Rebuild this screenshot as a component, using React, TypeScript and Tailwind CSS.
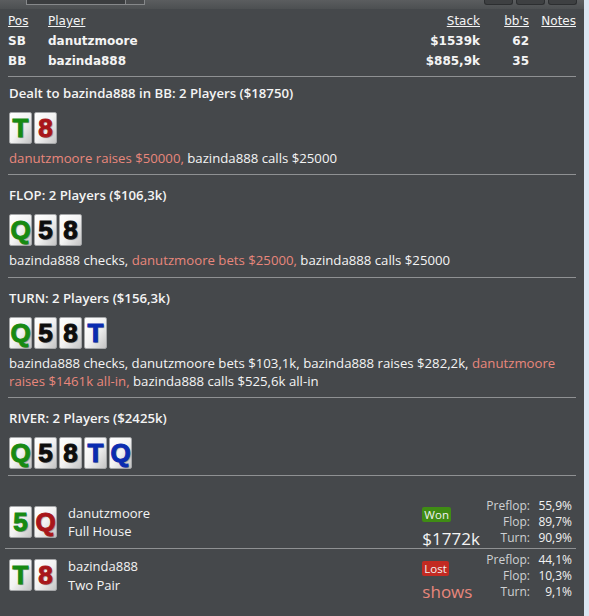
import React from "react";

type Suit = "g" | "r" | "k" | "b";

const suitColor: Record<Suit, string> = {
  g: "text-[#178a12]",
  r: "text-[#a8161a]",
  k: "text-[#0d0d0d]",
  b: "text-[#0a2cb0]",
};

function Card({ rank, suit }: { rank: string; suit: Suit }) {
  return (
    <div className="flex h-[32px] w-[23px] items-center justify-center overflow-hidden rounded-[2px] border border-[#a4a6a8] bg-gradient-to-br from-white via-[#f3f3f3] to-[#c4c4c4]">
      <span
        className={`font-['Liberation_Sans',sans-serif] text-[26px] font-bold leading-none [-webkit-text-stroke:1px_currentColor] [text-shadow:1px_1px_1px_rgba(0,0,0,0.35)] ${suitColor[suit]}`}
      >
        {rank}
      </span>
    </div>
  );
}

function Cards({ cards }: { cards: [string, Suit][] }) {
  return (
    <div className="flex gap-[2px]">
      {cards.map(([r, s], i) => (
        <Card key={i} rank={r} suit={s} />
      ))}
    </div>
  );
}

const Sep = () => <div className="ml-[8px] mr-[8px] h-px bg-[#8f9193]" />;

const Hot = ({ children }: { children: React.ReactNode }) => (
  <span className="text-[#e8877c]">{children}</span>
);

function Street({
  title,
  cards,
  top = "pt-[11px]",
  bottom = "pb-[8px]",
  children,
}: {
  title: string;
  cards: [string, Suit][];
  top?: string;
  bottom?: string;
  children?: React.ReactNode;
}) {
  return (
    <div className={`pl-[9px] pr-[8px] ${top} ${bottom}`}>
      <div className="text-[13.2px] font-semibold leading-[18px] text-[#f4f4f4]">{title}</div>
      <div className="mt-[10px]">
        <Cards cards={cards} />
      </div>
      {children && <div className="mt-[5px] text-[13.2px] leading-[18px] text-[#f4f4f4]">{children}</div>}
    </div>
  );
}

function Stats({ rows }: { rows: [string, string][] }) {
  return (
    <div className="grid grid-cols-[auto_42px] text-[12px] leading-[16px]">
      {rows.map(([k, v]) => (
        <React.Fragment key={k}>
          <span className="text-right text-[#cfd1d3]">{k}</span>
          <span className="text-right text-[#f2f2f2]">{v}</span>
        </React.Fragment>
      ))}
    </div>
  );
}

export default function App() {
  return (
    <div className="flex h-[616px] w-[589px] overflow-hidden bg-[#dbe6f2] font-['Open_Sans',sans-serif]">
      <div className="w-[584px] bg-[#45484b]">
        {/* toolbar, cut off at the top */}
        <div className="flex h-[9px] items-start bg-gradient-to-b from-[#5b5d5f] to-[#4d5052] pl-[26px] pr-[7px]">
          <div className="h-[5px] w-[100px] border-b border-l border-r border-[#86888a] bg-[#3b3d3f]" />
          <div className="h-[5px] w-[19px] border-b border-r border-[#86888a] bg-[#4a4c4e]" />
          <div className="ml-auto flex gap-[3px]">
            {[0, 1, 2].map((i) => (
              <div
                key={i}
                className="h-[5px] w-[29px] rounded-b-[3px] border-b border-l border-r border-[#2c2e30] bg-[#3e4042]"
              />
            ))}
          </div>
        </div>

        {/* players table */}
        <div className="pb-[5px] pl-[8px] pr-[8px] pt-[2px] font-['DejaVu_Sans',sans-serif] text-[12px] leading-[20px] text-[#f4f4f4]">
          <div className="grid grid-cols-[40px_1fr_80px_49px_47px]">
            <span className="underline">Pos</span>
            <span className="underline">Player</span>
            <span className="text-right underline">Stack</span>
            <span className="text-right underline">bb's</span>
            <span className="text-right underline">Notes</span>
            <span className="font-bold">SB</span>
            <span className="font-bold">danutzmoore</span>
            <span className="text-right font-bold">$1539k</span>
            <span className="text-right font-bold">62</span>
            <span />
            <span className="font-bold">BB</span>
            <span className="font-bold">bazinda888</span>
            <span className="text-right font-bold">$885,9k</span>
            <span className="text-right font-bold">35</span>
            <span />
          </div>
        </div>
        <Sep />

        <Street
          title="Dealt to bazinda888 in BB: 2 Players ($18750)"
          cards={[["T", "g"], ["8", "r"]]}
          top="pt-[7px]"
          bottom="pb-[7px]"
        >
          <Hot>danutzmoore raises $50000,</Hot> bazinda888 calls $25000
        </Street>
        <Sep />

        <Street title="FLOP: 2 Players ($106,3k)" cards={[["Q", "g"], ["5", "k"], ["8", "k"]]}>
          bazinda888 checks, <Hot>danutzmoore bets $25000,</Hot> bazinda888 calls $25000
        </Street>
        <Sep />

        <Street
          title="TURN: 2 Players ($156,3k)"
          cards={[["Q", "g"], ["5", "k"], ["8", "k"], ["T", "b"]]}
          bottom="pb-[7px]"
        >
          bazinda888 checks, danutzmoore bets $103,1k, bazinda888 raises $282,2k,{" "}
          <Hot>danutzmoore raises $1461k all-in,</Hot> bazinda888 calls $525,6k all-in
        </Street>
        <Sep />

        <Street
          title="RIVER: 2 Players ($2425k)"
          cards={[["Q", "g"], ["5", "k"], ["8", "k"], ["T", "b"], ["Q", "b"]]}
          bottom="pb-[6px]"
        />
        <Sep />

        {/* showdown */}
        <div className="flex h-[72px] items-start pl-[9px] pr-[12px] pt-[22px]">
          <div className="mt-[8px]">
            <Cards cards={[["5", "g"], ["Q", "r"]]} />
          </div>
          <div className="ml-[11px] mt-[6px] text-[13px] leading-[18px] text-[#f4f4f4]">
            <div>danutzmoore</div>
            <div>Full House</div>
          </div>
          <div className="ml-auto mr-[10px] mt-[3px] w-[54px]">
            <span className="inline-block rounded-[2px] bg-[#3f8c14] px-[2px] text-[11.5px] leading-[15px] text-[#f2f2f2]">
              Won
            </span>
            <div className="mt-[3px] text-[17px] leading-[22px] text-[#f4f4f4]">$1772k</div>
          </div>
          <Stats rows={[["Preflop:", "55,9%"], ["Flop:", "89,7%"], ["Turn:", "90,9%"]]} />
        </div>
        <div className="ml-[5px] mr-[8px] h-px bg-[#8f9193]" />
        <div className="flex items-start pl-[9px] pr-[12px] pt-[3px]">
          <div className="mt-[7px]">
            <Cards cards={[["T", "g"], ["8", "r"]]} />
          </div>
          <div className="ml-[11px] mt-[5px] text-[13px] leading-[18px] text-[#f4f4f4]">
            <div>bazinda888</div>
            <div className="mt-px">Two Pair</div>
          </div>
          <div className="ml-auto mr-[10px] mt-[3px] w-[54px]">
            <span className="inline-block rounded-[2px] bg-[#c22a22] px-[2px] text-[11.5px] leading-[15px] text-[#f2f2f2]">
              Lost
            </span>
            <div className="mt-[2px] text-[17px] leading-[22px] text-[#e8877c]">shows</div>
          </div>
          <Stats rows={[["Preflop:", "44,1%"], ["Flop:", "10,3%"], ["Turn:", "9,1%"]]} />
        </div>
      </div>
    </div>
  );
}
